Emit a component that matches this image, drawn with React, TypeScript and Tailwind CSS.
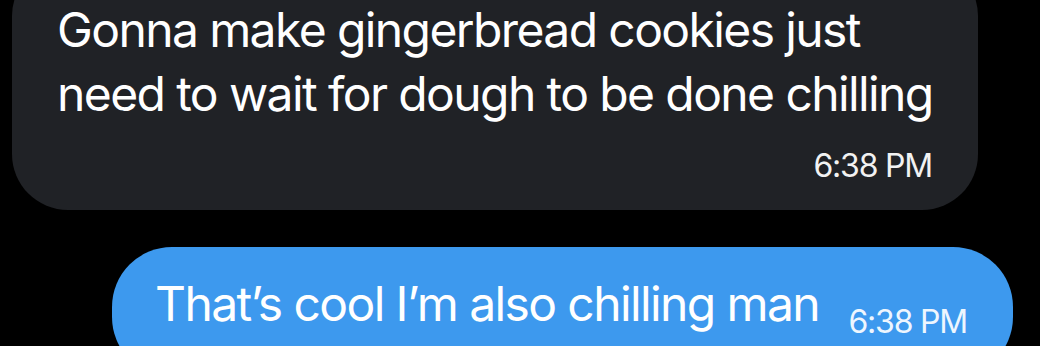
import React from "react";

const App = () => {
  return (
    <div
      className="w-[1040px] h-[346px] bg-black overflow-hidden flex flex-col"
      style={{ fontFamily: "Inter, 'Noto Sans', sans-serif" }}
    >
      {/* incoming message, top is cut off */}
      <div className="ml-[12px] w-[966px] -mt-[40px] pt-[38px] pl-[45px] pr-[46px] pb-[24px] bg-[#202226] rounded-[56px] text-white">
        <p className="text-[48px] leading-[64px] tracking-[-1.6px] whitespace-nowrap">
          Gonna make gingerbread cookies just
          <br />
          need to wait for dough to be done chilling
        </p>
        <div className="mt-[20px] text-right text-[32px] leading-[40px] tracking-[-1.2px] text-[#f2f2f2]">
          6:38 PM
        </div>
      </div>

      {/* outgoing message */}
      <div className="mt-[37px] ml-[112px] w-[901px] h-[130px] shrink-0 pt-[25px] pl-[43px] pr-[46px] bg-[#3d99ee] rounded-[60px] text-white flex items-start justify-between">
        <p className="text-[48px] leading-[64px] tracking-[-1.6px] whitespace-nowrap">
          That’s cool I’m also chilling man
        </p>
        <span className="mt-[35px] text-[32px] leading-[30px] tracking-[-1.2px] text-[#eef6fe] whitespace-nowrap">
          6:38 PM
        </span>
      </div>
    </div>
  );
};

export default App;
